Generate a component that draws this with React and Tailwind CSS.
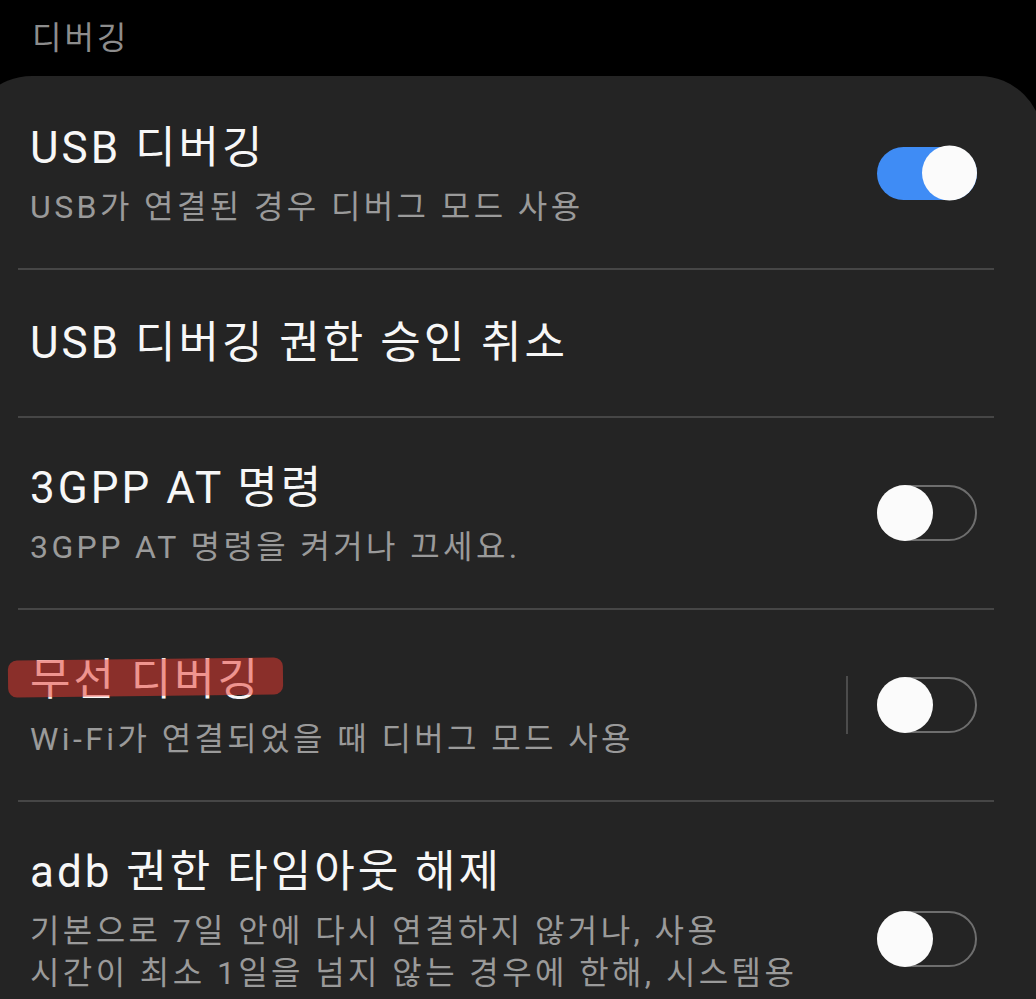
import React from "react";

const FONT = { fontFamily: 'Roboto, "Noto Sans CJK KR", sans-serif' };

function Toggle({ on }) {
  if (on) {
    return (
      <div className="relative h-[53px] w-[100px] shrink-0 rounded-full bg-[#3f8cf5]">
        <div className="absolute right-0 top-1/2 h-[55px] w-[55px] -translate-y-1/2 rounded-full bg-[#fbfbfb]" />
      </div>
    );
  }
  return (
    <div className="relative h-[56px] w-[100px] shrink-0 rounded-full border-2 border-[#6e6e6e]">
      <div className="absolute left-[-2px] top-1/2 h-[56px] w-[56px] -translate-y-1/2 rounded-full bg-[#fbfbfb]" />
    </div>
  );
}

function Divider() {
  return <div className="ml-[50px] mr-[49px] h-[2px] bg-[#464646]" />;
}

function Row({ title, sub, toggle, on, pt = "pt-[40px]", highlight, sep, subClass = "" }) {
  return (
    <div className={`flex items-center pl-[62px] pr-[66px] ${pt} pb-[40px]`}>
      <div className="min-w-0 flex-1">
        <div className="relative text-[44px] leading-[60px] tracking-[3px] text-[#f7f7f7]">
          <span>{title}</span>
          {highlight && (
            <div className="absolute left-[-22px] top-[9px] h-[37px] w-[275px] -rotate-[0.7deg] rounded-[9px] bg-[rgba(232,58,48,0.52)]" />
          )}
        </div>
        {sub && (
          <div className={`mt-[8px] text-[32px] leading-[42px] tracking-[3.4px] text-[#9a9a9a] ${subClass}`}>
            {sub}
          </div>
        )}
      </div>
      {sep && <div className="mr-[29px] h-[58px] w-[2px] bg-[#4c4c4c]" />}
      {toggle && <Toggle on={on} />}
    </div>
  );
}

export default function App() {
  return (
    <div className="h-[999px] w-full overflow-hidden bg-black" style={FONT}>
      <div className="flex h-[76px] items-center pl-[32px] text-[32px] tracking-[3px] text-[#8d8d8d]">
        디버깅
      </div>
      <div className="-ml-[32px] -mr-[7px] rounded-t-[64px] bg-[#242424]">
        <Row
          pt="pt-[42px]"
          title="USB 디버깅"
          sub="USB가 연결된 경우 디버그 모드 사용"
          toggle
          on
        />
        <Divider />
        <div className="flex items-center py-[43px] pl-[62px] pr-[66px]">
          <div className="text-[44px] leading-[60px] tracking-[3px] text-[#f7f7f7]">
            USB 디버깅 권한 승인 취소
          </div>
        </div>
        <Divider />
        <Row title="3GPP AT 명령" sub="3GPP AT 명령을 켜거나 끄세요." toggle />
        <Divider />
        <Row
          title="무선 디버깅"
          sub="Wi-Fi가 연결되었을 때 디버그 모드 사용"
          toggle
          sep
          highlight
        />
        <Divider />
        <Row
          title="adb 권한 타임아웃 해제"
          subClass="pb-[42px]"
          sub={
            <>
              기본으로 7일 안에 다시 연결하지 않거나, 사용
              <br />
              시간이 최소 1일을 넘지 않는 경우에 한해, 시스템용
            </>
          }
          toggle
        />
      </div>
    </div>
  );
}
